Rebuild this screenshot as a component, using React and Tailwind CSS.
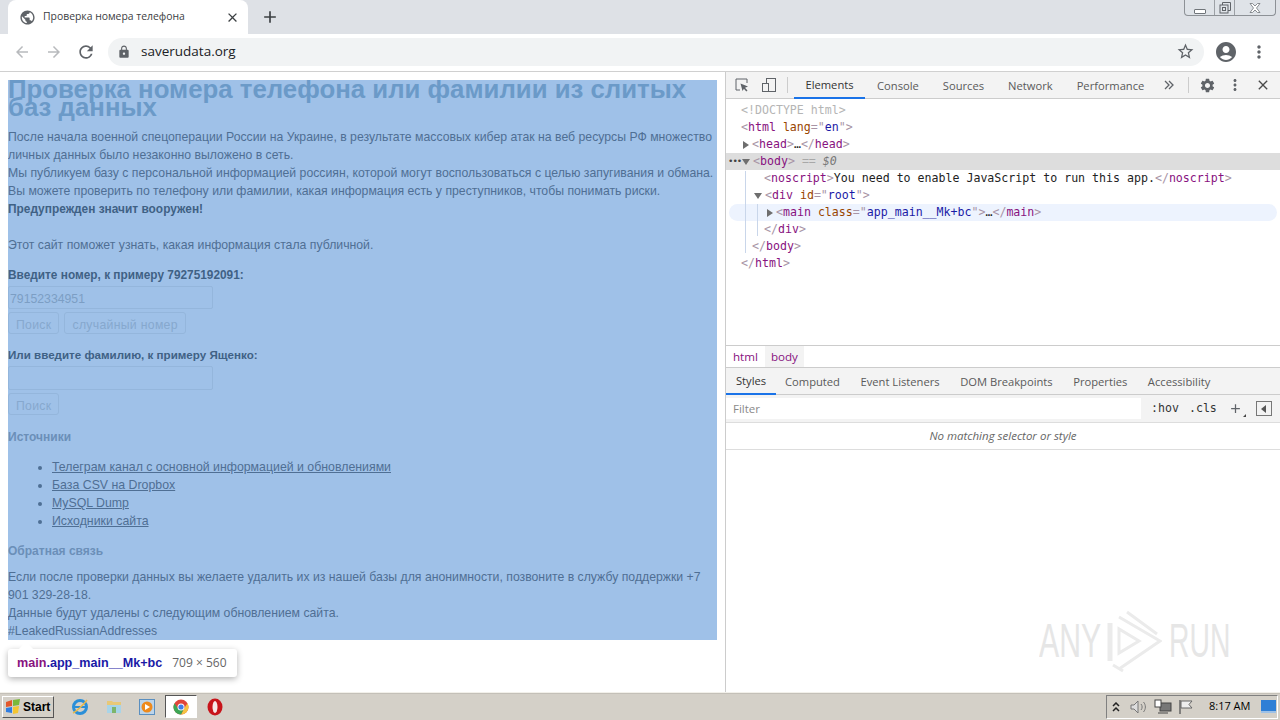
import React from "react";
import {
  MdAdd, MdArrowBack, MdArrowForward, MdClose, MdLock, MdMoreVert, MdPublic,
  MdRefresh, MdSettings, MdStarBorder, MdAccountCircle,
} from "react-icons/md";

const sans = "font-['Liberation_Sans',Arial,sans-serif]";
const ui = "font-['Open_Sans','Noto_Sans',sans-serif]";
const mono = "font-['DejaVu_Sans_Mono',monospace]";

// brackets are paler than the tag name in devtools
const B = ({ children }) => <span className="text-[#a894a6]">{children}</span>;
const Open = ({ name, children }) => (
  <>
    <B>&lt;</B><span className="text-[#881280]">{name}</span>{children}<B>&gt;</B>
  </>
);
const Close = ({ name }) => (
  <>
    <B>&lt;/</B><span className="text-[#881280]">{name}</span><B>&gt;</B>
  </>
);
const Attr = ({ name, value }) => (
  <>
    {" "}<span className="text-[#994500]">{name}</span><B>="</B><span className="text-[#1a1aa6]">{value}</span><B>"</B>
  </>
);
const ArrowR = () => <span className="inline-block w-0 h-0 border-y-[4px] border-y-transparent border-l-[6px] border-l-[#6e6e6e]" />;
const ArrowD = () => <span className="inline-block w-0 h-0 border-x-[4px] border-x-transparent border-t-[6px] border-t-[#6e6e6e]" />;

const Row = ({ pad, className = "", children }) => (
  <div className={`h-[17px] leading-[17px] whitespace-pre flex items-center ${pad} ${className}`}>{children}</div>
);

const DevTabs = ["Console", "Sources", "Network", "Performance"];
const StyleTabs = ["Computed", "Event Listeners", "DOM Breakpoints", "Properties", "Accessibility"];

const links = [
  "Телеграм канал с основной информацией и обновлениями",
  "База CSV на Dropbox",
  "MySQL Dump",
  "Исходники сайта",
];

function TabStrip() {
  return (
    <div className="h-[34px] bg-[#dee1e6] flex shrink-0">
      <div className="w-[240px] ml-2 h-[34px] bg-white rounded-t-[8px] flex items-center pl-[11px] pr-[8px]">
        <MdPublic size={17} className="text-[#5f6368] shrink-0" />
        <span className={`ml-[7px] text-[10.4px] text-[#3c4043] flex-1 ${ui}`}>Проверка номера телефона</span>
        <MdClose size={15} className="text-[#3c4043]" />
      </div>
      <MdAdd size={20} className="ml-[12px] mt-[7px] text-[#3c4043]" />
      <div className="ml-auto mr-[4px] w-[92px] h-[16px] flex border border-t-0 border-[#8d9196] rounded-b-[4px] bg-[#dfe3e8]">
        <div className="w-[30px] border-r border-[#9ca0a5] flex items-end justify-center pb-[1px]">
          <div className="w-[12px] h-[5px] border border-[#70757a] rounded-[1px] bg-white" />
        </div>
        <div className="w-[20px] border-r border-[#9ca0a5] flex items-center justify-center">
          <svg width="12" height="12" viewBox="0 0 12 12" fill="none" stroke="#5f6368">
            <path d="M3.5 3V.5h8v8H9" />
            <rect x="1" y="3" width="8" height="8" />
            <rect x="3.5" y="5.5" width="3" height="3" />
          </svg>
        </div>
        <div className="flex-1 flex items-center justify-center">
          <svg width="12" height="10" viewBox="0 0 12 10" fill="white" stroke="#70757a" strokeWidth="0.8">
            <path d="M1 .5h2.5L6 3 8.500.5H11L7.500 5 11 9.500H8.500L6 7 3.500 9.500H1L4.500 5z" />
          </svg>
        </div>
      </div>
    </div>
  );
}

function Toolbar() {
  return (
    <div className="h-[38px] pb-[2px] bg-white border-b border-[#d0d0d0] flex items-center shrink-0">
      <MdArrowBack size={18} className="ml-[13px] text-[#b8babd]" />
      <MdArrowForward size={18} className="ml-[14px] text-[#b8babd]" />
      <MdRefresh size={20} className="ml-[13px] text-[#5f6368]" />
      <div className="ml-[12px] w-[1096px] h-[28px] rounded-full bg-[#f1f3f4] flex items-center pl-[9px] pr-[9px]">
        <MdLock size={14} className="text-[#5f6368]" />
        <span className={`ml-[10px] text-[13.5px] text-[#202124] flex-1 ${ui}`}>saverudata.org</span>
        <MdStarBorder size={19} className="text-[#5f6368]" />
      </div>
      <MdAccountCircle size={24} className="ml-[10px] text-[#5f6368]" />
      <MdMoreVert size={20} className="ml-[11px] text-[#5f6368]" />
    </div>
  );
}

function Page() {
  const label = "font-bold text-[#3f6185]";
  const btn = "h-[22px] px-[7px] pt-[3px] border border-[#94b6dc] rounded-[3px] text-[#86a8ce] tracking-[0.3px] flex items-center";
  const input = "w-[205px] border border-[#94b6dc] rounded-[2px] pl-[1px] pt-[2px] text-[#7c9ec4] flex items-center";
  return (
    <div className={`w-[725px] shrink-0 bg-white relative pt-2 pl-2 ${sans}`}>
      <main className="w-[709px] h-[560px] bg-[#9fc1e8] text-[12.25px] leading-[18px] text-[#4f6f94] overflow-hidden">
        <h1 className="text-[25.8px] leading-[18px] font-bold text-[#6b9ac8]">
          Проверка номера телефона или фамилии из слитых баз данных
        </h1>
        <p className="mt-[12px] w-[709px]">
          После начала военной спецоперации России на Украине, в результате массовых кибер атак на веб ресурсы РФ множество личных данных было незаконно выложено в сеть.
          <br />
          Мы публикуем базу с персональной информацией россиян, которой могут воспользоваться с целью запугивания и обмана.
          <br />
          Вы можете проверить по телефону или фамилии, какая информация есть у преступников, чтобы понимать риски.
          <br />
          <b className="text-[#3f6185] text-[11.9px]">Предупрежден значит вооружен!</b>
          <br />
          <br />
          Этот сайт поможет узнать, какая информация стала публичной.
        </p>
        <p className={`mt-[12px] text-[11.85px] ${label}`}>Введите номер, к примеру 79275192091:</p>
        <div className={`mt-[2px] h-[23px] ${input}`}>79152334951</div>
        <div className="mt-[3px] flex gap-[5px]">
          <div className={btn}>Поиск</div>
          <div className={btn}>случайный номер</div>
        </div>
        <p className={`mt-[12px] text-[11.6px] ${label}`}>Или введите фамилию, к примеру Ященко:</p>
        <div className={`mt-[2px] h-[24px] ${input}`} />
        <div className="mt-[3px] flex">
          <div className={btn}>Поиск</div>
        </div>
        <h3 className="mt-[13px] font-bold text-[12px] text-[#6b8fb8]">Источники</h3>
        <ul className="mt-[12px] pl-[44px] list-disc text-[12.33px]">
          {links.map((l) => (
            <li key={l} className="underline">{l}</li>
          ))}
        </ul>
        <h3 className="mt-[12px] font-bold text-[12px] text-[#6b8fb8]">Обратная связь</h3>
        <p className="mt-[8px]">
          Если после проверки данных вы желаете удалить их из нашей базы для анонимности, позвоните в службу поддержки +7 901 329-28-18.
          <br />
          Данные будут удалены с следующим обновлением сайта.
          <br />
          #LeakedRussianAddresses
        </p>
      </main>
      <div className="absolute left-[8px] top-[577px] w-[229px] h-[28px] bg-white rounded-[3px] shadow-[0_2px_6px_rgba(0,0,0,0.3)] flex items-center pl-[9px] text-[12.6px]">
        <span className="absolute left-[13px] -top-[5px] w-[10px] h-[10px] bg-white rotate-45" />
        <b className="relative text-[#881280]">main</b>
        <b className="relative text-[#1a1aa6]">.app_main__Mk+bc</b>
        <span className={`ml-[10px] text-[12px] text-[#666] ${ui}`}>709 × 560</span>
      </div>
    </div>
  );
}

function Watermark() {
  const word = `block text-[48px] leading-none text-[#e6e6e6] origin-left whitespace-nowrap ${sans}`;
  return (
    <div className="absolute left-[313px] top-[159px] flex items-center select-none">
      <div className="w-[68px]">
        <span className={`${word} scale-x-[0.63]`}>ANY</span>
      </div>
      <svg width="55" height="64" viewBox="0 0 55 64" fill="none" stroke="#ebebeb" strokeWidth="3">
        <path d="M3 14v38" strokeWidth="5" />
        <path d="M12 8L53 32 12 60" />
        <path d="M12 20v24l20-12z" />
        <path d="M20 3l30 22" />
        <path d="M6 56l10 6" />
      </svg>
      <div className="w-[62px] ml-[7px]">
        <span className={`${word} scale-x-[0.59]`}>RUN</span>
      </div>
    </div>
  );
}

function DevTools() {
  return (
    <div className={`flex-1 border-l border-[#ccc] flex flex-col min-w-0 bg-white ${ui}`}>
      <div className="h-[27px] bg-[#f3f3f3] border-b border-[#ccc] flex items-center text-[#5a5a5a] text-[11.2px] shrink-0">
        <svg width="16" height="16" viewBox="0 0 16 16" fill="none" className="ml-[8px]">
          <path d="M13 6V2H2v11h4" stroke="#5f6368" />
          <path d="M6.500 6.500l7.500 3-3 1.200 2.500 2.800-1.200 1-2.400-2.800L8.500 14z" fill="#5f6368" />
        </svg>
        <svg width="16" height="16" viewBox="0 0 16 16" fill="none" stroke="#5f6368" className="ml-[11px]">
          <rect x="5.500" y="1.500" width="9" height="13" />
          <rect x="1.500" y="6.500" width="6" height="8" fill="#f3f3f3" />
        </svg>
        <div className="ml-[10px] w-px h-[16px] bg-[#ccc]" />
        <div className="ml-[6px] w-[71px] h-[27px] pt-[2px] border-b-2 border-[#1a73e8] text-[#333] flex items-center justify-center">Elements</div>
        {DevTabs.map((t) => (
          <span key={t} className="ml-[12px] mr-[12px] pt-[2px]">{t}</span>
        ))}
        <svg width="10" height="10" viewBox="0 0 10 10" fill="none" stroke="#5f6368" strokeWidth="1.300" className="ml-[8px]">
          <path d="M1 1l4 4-4 4M5 1l4 4-4 4" />
        </svg>
        <div className="ml-[14px] w-px h-[16px] bg-[#ccc]" />
        <MdSettings size={17} className="ml-[10px] text-[#5f6368]" />
        <MdMoreVert size={18} className="ml-[10px] text-[#5f6368]" />
        <MdClose size={16} className="ml-[11px] text-[#4a4a4a]" />
      </div>
      <div className={`relative h-[246px] pt-[3px] text-[11.6px] text-[#222] ${mono} shrink-0`}>
        <Row pad="pl-[15px]"><span className="text-[#b5b5b5]">&lt;!DOCTYPE html&gt;</span></Row>
        <Row pad="pl-[15px]"><span><Open name="html"><Attr name="lang" value="en" /></Open></span></Row>
        <Row pad="pl-[17px]"><ArrowR /><span className="ml-[3px]"><Open name="head" />…<Close name="head" /></span></Row>
        <Row pad="pl-[2px]" className="bg-[#dddddd]">
          <span className="text-[#444] w-[14px] text-[9px] tracking-[-1px]">•••</span>
          <ArrowD />
          <span className="ml-[3px]"><Open name="body" /> <span className="text-[#a8a8a8]">==</span> <i className="text-[#777]">$0</i></span>
        </Row>
        <Row pad="pl-[38px]"><span><Open name="noscript" />You need to enable JavaScript to run this app.<Close name="noscript" /></span></Row>
        <Row pad="pl-[28px]"><ArrowD /><span className="ml-[3px]"><Open name="div"><Attr name="id" value="root" /></Open></span></Row>
        <Row pad="pl-[38px]" className="bg-[#edf3fe] rounded-l-full ml-[3px] mr-[3px] rounded-r-full">
          <ArrowR />
          <span className="ml-[3px]"><Open name="main"><Attr name="class" value="app_main__Mk+bc" /></Open>…<Close name="main" /></span>
        </Row>
        <Row pad="pl-[38px]"><Close name="div" /></Row>
        <Row pad="pl-[26px]"><Close name="body" /></Row>
        <Row pad="pl-[15px]"><Close name="html" /></Row>
        {/* guide lines of the open nodes */}
        <div className="absolute left-[19px] top-[72px] w-px h-[82px] bg-[#c9d6ea]" />
        <div className="absolute left-[31px] top-[105px] w-px h-[32px] bg-[#c9d6ea]" />
      </div>
      <div className="h-[23px] border-y border-[#ccc] bg-white flex text-[11.6px] text-[#881280] shrink-0">
        <span className="px-[7px] leading-[21px]">html</span>
        <span className="px-[6px] leading-[21px] bg-[#f3f3f3]">body</span>
      </div>
      <div className="h-[27px] bg-[#f3f3f3] border-b border-[#ccc] flex items-center text-[11.2px] text-[#5a5a5a] shrink-0">
        <div className="w-[50px] h-[27px] pt-[2px] border-b-2 border-[#1a73e8] text-[#333] flex items-center justify-center">Styles</div>
        {StyleTabs.map((t) => (
          <span key={t} className="ml-[9px] mr-[11.5px] pt-[2px]">{t}</span>
        ))}
      </div>
      <div className="h-[27px] bg-[#f3f3f3] flex items-center shrink-0">
        <div className="w-[415px] h-[21px] bg-white pl-[7px] text-[11.5px] text-[#8a8a8a] flex items-center">Filter</div>
        <span className={`ml-[10px] text-[11.6px] text-[#333] ${mono}`}>:hov</span>
        <span className={`ml-[10px] text-[11.6px] text-[#333] ${mono}`}>.cls</span>
        <MdAdd size={15} className="ml-[11px] text-[#5f6368]" />
        <span className="w-0 h-0 mt-[13px] border-l-[3px] border-l-transparent border-b-[3px] border-b-[#444]" />
        <div className="ml-[10px] w-[16px] h-[15px] border border-[#777] flex items-center justify-center">
          <span className="w-0 h-0 border-y-[4px] border-y-transparent border-r-[5px] border-r-[#555]" />
        </div>
      </div>
      <div className="h-[28px] border-y border-[#ddd] flex items-center justify-center text-[11.5px] italic text-[#666] shrink-0">
        No matching selector or style
      </div>
      <div className="flex-1 relative">
        <Watermark />
      </div>
    </div>
  );
}

function Taskbar() {
  return (
    <div className={`h-[28px] bg-[#d4d0c8] border-t border-[#f2f0ea] flex items-center shrink-0 shadow-[inset_0_1px_0_#c4c0b8] ${sans}`}>
      <div className="ml-[2px] w-[52px] h-[22px] bg-[#d4d0c8] border border-t-white border-l-white border-r-[#555] border-b-[#555] flex items-center pl-[2px]">
        <svg width="17" height="15" viewBox="0 0 17 15">
          <path d="M1 3l6-2v6l-6 1z" fill="#e2572b" />
          <path d="M8 1l7-1-1 6-6 1z" fill="#7ab83a" />
          <path d="M1 9l6-1v6l-6-1z" fill="#2f7de1" />
          <path d="M8 8l6-1-1 7-5 1z" fill="#f4c531" />
        </svg>
        <b className="ml-[1px] text-[12px] text-black">Start</b>
      </div>
      <svg width="18" height="18" viewBox="0 0 18 18" className="ml-[17px]">
        <circle cx="9" cy="9" r="6.500" fill="none" stroke="#2b8fd8" strokeWidth="3" />
        <path d="M3 9h12" stroke="#2b8fd8" strokeWidth="2" />
        <path d="M2 15C6 13 13 6 16 2" stroke="#e9b949" strokeWidth="1.500" fill="none" />
      </svg>
      <svg width="18" height="18" viewBox="0 0 18 18" className="ml-[16px]">
        <path d="M2 3h5l1 1h8v11H2z" fill="#e8c877" />
        <path d="M2 7h14v8H2z" fill="#a8d4e8" />
        <rect x="7" y="9" width="4" height="6" fill="#7db56b" />
      </svg>
      <svg width="18" height="18" viewBox="0 0 18 18" className="ml-[15px]">
        <rect x="1.500" y="1.500" width="15" height="15" fill="#bcd4ea" stroke="#5a8fc0" />
        <circle cx="9" cy="9" r="5.500" fill="#ee8a1d" />
        <path d="M7 6l5 3-5 3z" fill="#fff" />
      </svg>
      <div className="ml-[9px] w-[32px] h-[23px] bg-white border border-t-[#555] border-l-[#555] border-r-white border-b-white flex items-center justify-center">
        <svg width="16" height="16" viewBox="0 0 16 16">
          <circle cx="8" cy="8" r="7.500" fill="#e0453a" />
          <path d="M14.500 4.250A7.500 7.500 0 0 1 8 15.500l3-6z" fill="#f6c343" />
          <path d="M1.500 4.250A7.500 7.500 0 0 0 8 15.500l3-6H5z" fill="#3ca655" />
          <circle cx="8" cy="8" r="3.500" fill="#fff" />
          <circle cx="8" cy="8" r="2.600" fill="#3f7de8" />
        </svg>
      </div>
      <svg width="16" height="18" viewBox="0 0 16 18" className="ml-[10px]">
        <ellipse cx="8" cy="9" rx="7.500" ry="8.500" fill="#c8141b" />
        <ellipse cx="8" cy="9" rx="2.500" ry="6" fill="#f7e8e8" />
      </svg>
      <div className="ml-auto mr-[2px] w-[172px] h-[24px] border border-t-[#808080] border-l-[#808080] border-r-white border-b-white flex items-center">
        <svg width="8" height="10" viewBox="0 0 8 10" fill="none" stroke="#222" strokeWidth="1.500" className="ml-[5px]">
          <path d="M1 4l3-3 3 3M1 9l3-3 3 3" />
        </svg>
        <svg width="18" height="16" viewBox="0 0 18 16" fill="none" stroke="#777" className="ml-[9px]">
          <path d="M2 6h3l4-4v12l-4-4H2z" fill="#ddd" />
          <path d="M12 5c1.500 2 1.500 4 0 6M14.500 3c2.500 3 2.500 7 0 10" />
        </svg>
        <svg width="18" height="16" viewBox="0 0 18 16" className="ml-[7px]">
          <rect x="6" y="4" width="11" height="8" fill="#777" stroke="#444" />
          <rect x="1" y="1" width="6" height="7" fill="#fff" stroke="#444" />
          <path d="M4 14h10" stroke="#444" />
        </svg>
        <svg width="16" height="16" viewBox="0 0 16 16" fill="none" stroke="#666" className="ml-[6px]">
          <path d="M2 1v14" strokeWidth="1.500" />
          <path d="M3 2h11l-3 3.500 3 3.500H3z" fill="#eee" />
        </svg>
        <span className={`ml-[15px] text-[11px] text-black ${ui}`}>8:17 AM</span>
        <div className="ml-[11px] w-[15px] h-[13px] bg-[#2f7fd6] border-b-2 border-[#9ec1e6]" />
      </div>
    </div>
  );
}

export default function App() {
  return (
    <div className="w-[1280px] h-[720px] flex flex-col overflow-hidden bg-white">
      <TabStrip />
      <Toolbar />
      <div className="flex flex-1 min-h-0">
        <Page />
        <DevTools />
      </div>
      <Taskbar />
    </div>
  );
}
